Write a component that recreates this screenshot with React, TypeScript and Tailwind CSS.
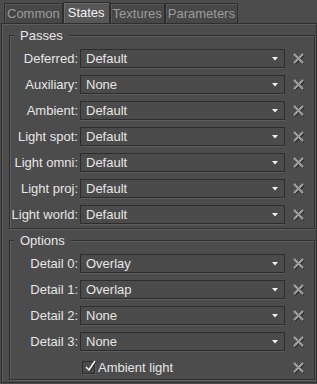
import React from 'react'

const passes = [
  ['Deferred:', 'Default'],
  ['Auxiliary:', 'None'],
  ['Ambient:', 'Default'],
  ['Light spot:', 'Default'],
  ['Light omni:', 'Default'],
  ['Light proj:', 'Default'],
  ['Light world:', 'Default'],
]

const options = [
  ['Detail 0:', 'Overlay'],
  ['Detail 1:', 'Overlap'],
  ['Detail 2:', 'None'],
  ['Detail 3:', 'None'],
]

function ClearIcon() {
  return (
    <svg width="12" height="12" viewBox="0 0 12 12" className="shrink-0">
      <path d="M2 2 L11 11 M11 2 L2 11" stroke="#2e2e2e" strokeWidth="1.8" />
      <path d="M1 1 L10 10 M10 1 L1 10" stroke="#bcbcbc" strokeWidth="1.8" />
      <path d="M1 1 L10 10 M10 1 L1 10" stroke="#808080" strokeWidth="1.8" strokeDasharray="1 1" />
    </svg>
  )
}

function Combo({ value }: { value: string }) {
  return (
    <div className="w-[205px] h-[19px] border border-[#2c2c2c] bg-[#4b4b4b] shadow-[0_1px_0_#5c5c5c] flex items-center pl-[5px] pr-[6px]">
      <span className="flex-1 leading-[15px]">{value}</span>
      <svg width="6" height="4" viewBox="0 0 6 4">
        <path d="M0 0 H6 L3 3.5 Z" fill="#f0f0f0" />
      </svg>
    </div>
  )
}

function Row({ label, value }: { label: string; value: string }) {
  return (
    <div className="flex items-center h-[19px]">
      <span className="w-[70px] text-right pr-[2px] whitespace-nowrap leading-[15px]">{label}</span>
      <Combo value={value} />
      <span className="ml-[8px]">
        <ClearIcon />
      </span>
    </div>
  )
}

function Tab({ label, active }: { label: string; active?: boolean }) {
  return (
    <div
      className={
        active
          ? 'h-[21px] px-[4px] border border-b-0 border-[#2e2e2e] bg-[#575757] text-[#f2f2f2] flex items-center shadow-[inset_1px_1px_0_#6a6a6a]'
          : 'h-[20px] px-[2px] border border-b-0 border-[#2e2e2e] bg-[#474747] text-[#9c9c9c] flex items-center shadow-[inset_1px_1px_0_#5a5a5a]'
      }
    >
      {label}
    </div>
  )
}

export default function App() {
  return (
    <div className="w-[317px] h-[384px] bg-[#4c4c4c] text-[#e6e6e6] text-[13px] font-['Liberation_Sans',Arial,sans-serif] flex flex-col overflow-hidden">
      <div className="flex items-end pl-[4px] pt-[2px] h-[23px]">
        <Tab label="Common" />
        <Tab label="States" active />
        <Tab label="Textures" />
        <Tab label="Parameters" />
      </div>
      <div className="flex-1 flex flex-col ml-[1px] mb-[1px] border border-[#2e2e2e] shadow-[inset_1px_1px_0_#5e5e5e] pl-[7px] pr-[1px]">
        <fieldset className="mt-[4px] border border-[#2f2f2f] shadow-[inset_1px_1px_0_#5e5e5e,1px_1px_0_#5e5e5e]">
          <legend className="ml-[4px] px-[6px] leading-[15px] bg-[#4c4c4c]">Passes</legend>
          <div className="flex flex-col gap-[7px] pt-[6px] pb-[4px]">
            {passes.map(([l, v]) => (
              <Row key={l} label={l} value={v} />
            ))}
          </div>
        </fieldset>
        <fieldset className="mt-[4px] mb-[2px] flex-1 border border-[#2f2f2f] shadow-[inset_1px_1px_0_#5e5e5e,1px_1px_0_#5e5e5e]">
          <legend className="ml-[4px] px-[6px] leading-[15px] bg-[#4c4c4c]">Options</legend>
          <div className="flex flex-col gap-[7px] pt-[6px]">
            {options.map(([l, v]) => (
              <Row key={l} label={l} value={v} />
            ))}
            <div className="flex items-center h-[19px]">
              <span className="w-[72px]" />
              <span className="relative w-[13px] h-[13px] border border-[#2c2c2c] bg-[#4a4a4a] shadow-[1px_1px_0_#5e5e5e]">
                <svg width="14" height="14" viewBox="0 0 14 14" className="absolute left-[0px] top-[-3px]">
                  <path d="M3 8 L6 11 L12 2" stroke="#2a2a2a" strokeWidth="2" fill="none" transform="translate(0.6 0.6)" />
                  <path d="M3 8 L6 11 L12 2" stroke="#f4f4f4" strokeWidth="1.6" fill="none" />
                </svg>
              </span>
              <span className="ml-[3px] leading-[15px]">Ambient light</span>
              <span className="flex-1" />
              <span className="mr-[9px]">
                <ClearIcon />
              </span>
            </div>
          </div>
        </fieldset>
      </div>
    </div>
  )
}
